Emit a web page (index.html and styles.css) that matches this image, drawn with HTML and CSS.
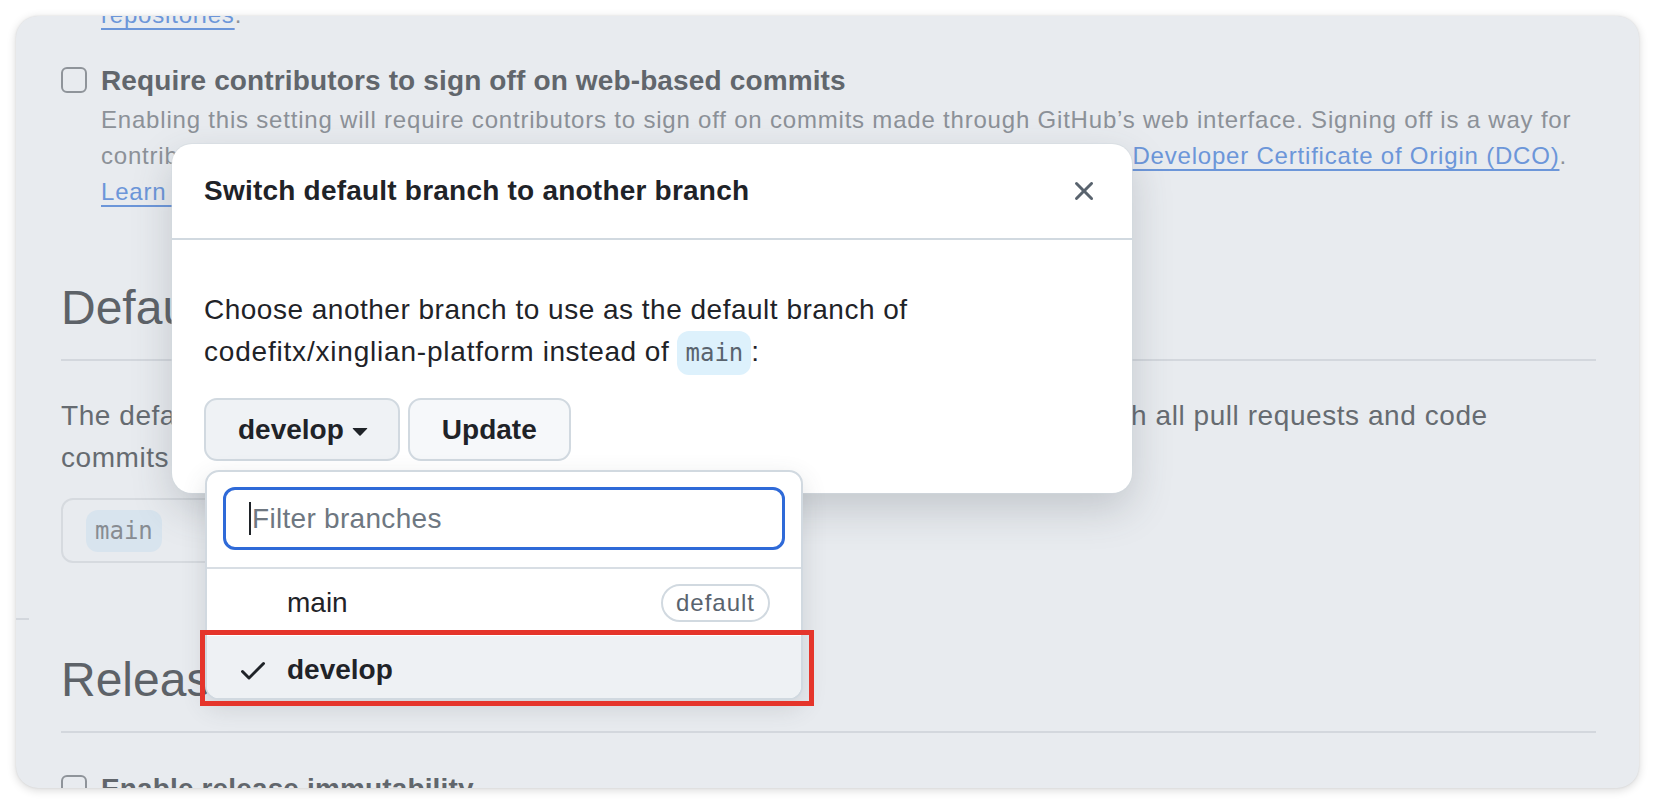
FILE: index.html
```html
<!DOCTYPE html>
<html lang="en">
<head>
<meta charset="utf-8">
<title>Switch default branch</title>
<link rel="stylesheet" href="styles.css">
</head>
<body>
<div class="window">
  <div class="page">
    <div class="note"><span class="link">repositories</span>.</div>

    <div class="setting">
      <span class="checkbox"></span>
      <div class="setting-body">
        <div class="setting-title">Require contributors to sign off on web-based commits</div>
        <div class="setting-desc">Enabling this setting will require contributors to sign off on commits made through GitHub’s web interface. Signing off is a way for<br>contributors to affirm that their commit complies with the repository's terms, commonly the <span class="link">Developer Certificate of Origin (DCO)</span>.<br><span class="link">Learn more about signing off on commits</span>.</div>
      </div>
    </div>

    <h2 class="section-title">Default branch</h2>
    <p class="section-text">The default branch is considered the “base” branch in your repository, against which all pull requests and code<br>commits are automatically made, unless you specify a different branch.</p>
    <div class="branch-box"><span class="code code-dim">main</span></div>

    <div class="stub"></div>

    <h2 class="section-title releases">Releases</h2>
    <div class="setting last">
      <span class="checkbox"></span>
      <div class="setting-body">
        <div class="setting-title">Enable release immutability</div>
      </div>
    </div>
  </div>

  <div class="dialog">
    <div class="dialog-header">
      <h1 class="dialog-title">Switch default branch to another branch</h1>
      <svg class="close" viewBox="0 0 16 16" aria-hidden="true"><path fill="currentColor" d="M3.72 3.72a.75.75 0 0 1 1.06 0L8 6.94l3.22-3.22a.749.749 0 0 1 1.275.326.749.749 0 0 1-.215.734L9.06 8l3.22 3.22a.749.749 0 0 1-.326 1.275.749.749 0 0 1-.734-.215L8 9.06l-3.22 3.22a.751.751 0 0 1-1.042-.018.751.751 0 0 1-.018-1.042L6.94 8 3.72 4.780a.75.75 0 0 1 0-1.06Z"/></svg>
    </div>
    <div class="dialog-body">
      <p class="dialog-text">Choose another branch to use as the default branch of<br><span class="repo">codefitx/xinglian-platform</span> instead of <span class="code code-main">main</span>:</p>
      <div class="actions">
        <div class="btn btn-menu">develop<svg class="caret-down" viewBox="0 0 16 16" aria-hidden="true"><path fill="currentColor" d="m4.427 7.427 3.396 3.396a.25.25 0 0 0 .354 0l3.396-3.396A.25.25 0 0 0 11.396 7H4.604a.25.25 0 0 0-.177.427Z"/></svg></div>
        <div class="btn">Update</div>
      </div>
    </div>

    <div class="menu">
      <div class="filter">
        <div class="filter-input"><span class="caret"></span><span class="placeholder">Filter branches</span></div>
      </div>
      <div class="item">
        <span class="item-icon"></span>
        <span class="item-label">main</span>
        <span class="pill">default</span>
      </div>
      <div class="item item-selected">
        <svg class="item-icon" viewBox="0 0 16 16" aria-hidden="true"><path fill="currentColor" d="M13.78 4.22a.75.75 0 0 1 0 1.06l-7.25 7.25a.75.75 0 0 1-1.06 0L2.22 9.28a.751.751 0 0 1 .018-1.042.751.751 0 0 1 1.042-.018L6 10.94l6.72-6.720a.75.75 0 0 1 1.06 0Z"/></svg>
        <span class="item-label">develop</span>
      </div>
    </div>

    <div class="highlight"></div>
  </div>
</div>
</body>
</html>
```

FILE: styles.css
```css
* { box-sizing: border-box; }
html, body { margin: 0; }
body {
  background: #ffffff;
  font-family: "Liberation Sans", Arial, sans-serif;
  width: 1656px;
  height: 804px;
  overflow: hidden;
  padding: 16px 17px 16px 16px;
}
.window {
  position: relative;
  height: 772px;
  border-radius: 22px;
  background: #e8ebef;
  box-shadow: 0 2px 10px rgba(0, 0, 0, 0.16), 0 0 2px rgba(0, 0, 0, 0.10);
  overflow: hidden;
}
.page {
  margin-top: -19px;
  padding: 0 43px 0 45px;
}
.note {
  font-size: 24px;
  line-height: 36px;
  color: #8c9198;
  padding-left: 40px;
  letter-spacing: 0.8px;
}
.link {
  color: #6c96d9;
  text-decoration: underline;
  text-decoration-thickness: 2px;
  text-underline-offset: 5px;
}
.setting {
  display: flex;
  gap: 14px;
  margin-top: 27px;
}
.setting.last { margin-top: 35px; }
.checkbox {
  flex: none;
  width: 26px;
  height: 26px;
  border: 2px solid #8f949a;
  border-radius: 6px;
  margin-top: 7px;
}
.setting-title {
  font-size: 28px;
  line-height: 42px;
  font-weight: 700;
  color: #61666c;
  letter-spacing: 0.14px;
}
.setting-desc {
  font-size: 24px;
  line-height: 36px;
  color: #8c9198;
  letter-spacing: 0.8px;
}
.section-title {
  margin: 68px 0 0;
  font-size: 48px;
  line-height: 60px;
  font-weight: 400;
  color: #5d6268;
  padding-bottom: 21px;
  border-bottom: 2px solid #d3d7dd;
}
.section-title.releases { margin-top: 30px; }
.section-text {
  margin: 34px 0 0;
  font-size: 28px;
  line-height: 42px;
  color: #666b71;
  letter-spacing: 0.56px;
}
.branch-box {
  margin-top: 19px;
  width: 540px;
  height: 65px;
  border: 2px solid #d6dadf;
  border-radius: 12px;
  padding-left: 23px;
  display: flex;
  align-items: center;
}
.code {
  font-family: "DejaVu Sans Mono", "Liberation Mono", monospace;
  font-size: 24px;
  border-radius: 12px;
  letter-spacing: 0;
}
.code-dim {
  display: inline-flex;
  align-items: center;
  height: 42px;
  padding: 0 9px;
  background: #d8e4ee;
  color: #878c92;
}
.stub {
  margin: 55px 0 0 -45px;
  width: 13px;
  height: 2px;
  background: #d3d7dd;
}

/* dialog */
.dialog {
  position: absolute;
  left: 156px;
  top: 128px;
  width: 960px;
  background: #ffffff;
  border-radius: 20px;
  box-shadow: 0 0 0 1px rgba(209, 217, 224, 0.5), 0 16px 40px rgba(66, 74, 83, 0.22);
}
.dialog-header {
  height: 96px;
  display: flex;
  align-items: center;
  justify-content: space-between;
  padding: 0 32px;
  border-bottom: 2px solid #d1d9e0;
}
.dialog-title {
  margin: 0;
  font-size: 28px;
  font-weight: 700;
  color: #1f2328;
  letter-spacing: 0.22px;
}
.close {
  width: 32px;
  height: 32px;
  color: #59636e;
}
.dialog-body {
  padding: 49px 32px 32px;
}
.dialog-text {
  margin: 0;
  font-size: 28px;
  line-height: 42px;
  color: #1f2328;
  letter-spacing: 0.5px;
}
.repo { letter-spacing: 0.8px; }
.code-main {
  padding: 8px 8px;
  background: #ddf1fc;
  color: #59636e;
}
.actions {
  display: flex;
  gap: 8px;
  margin-top: 24px;
}
.btn {
  height: 63px;
  display: flex;
  align-items: center;
  padding: 0 32px;
  border: 2px solid #d1d9e0;
  border-radius: 13px;
  background: #f6f8fa;
  font-size: 28px;
  font-weight: 700;
  color: #1f2328;
}
.btn-menu {
  background: #eff2f5;
  padding-right: 22px;
}
.caret-down {
  width: 32px;
  height: 32px;
  color: #1f2328;
}

/* branch menu */
.menu {
  position: absolute;
  left: 33px;
  top: 326px;
  width: 598px;
  background: #ffffff;
  border: 2px solid #d1d9e0;
  border-radius: 14px;
  box-shadow: 0 8px 24px rgba(66, 74, 83, 0.16);
  overflow: hidden;
}
.filter {
  padding: 15px 16px 17px;
  border-bottom: 2px solid #d8dee4;
}
.filter-input {
  height: 63px;
  display: flex;
  align-items: center;
  padding-left: 23px;
  border: 3px solid #2f6ad8;
  border-radius: 12px;
  font-size: 28px;
  color: #6e7781;
  letter-spacing: 0.3px;
}
.caret {
  width: 2px;
  height: 33px;
  background: #1f2328;
  margin-right: 1px;
}
.item {
  display: flex;
  align-items: center;
  height: 67px;
  padding-right: 31px;
  font-size: 28px;
  color: #1f2328;
}
.item-icon {
  flex: none;
  width: 32px;
  height: 32px;
  margin: 0 18px 0 30px;
  color: #1f2328;
}
.item-selected {
  height: 62px;
  padding-top: 6px;
  background: #eef1f4;
  font-weight: 700;
}
.pill {
  margin-left: auto;
  height: 38px;
  display: flex;
  align-items: center;
  padding: 0 13px;
  border: 2px solid #d1d9e0;
  border-radius: 20px;
  font-size: 24px;
  letter-spacing: 1px;
  color: #59636e;
}
.highlight {
  position: absolute;
  left: 28px;
  top: 486px;
  width: 614px;
  height: 76px;
  border: 5px solid #e5352b;
}
```
